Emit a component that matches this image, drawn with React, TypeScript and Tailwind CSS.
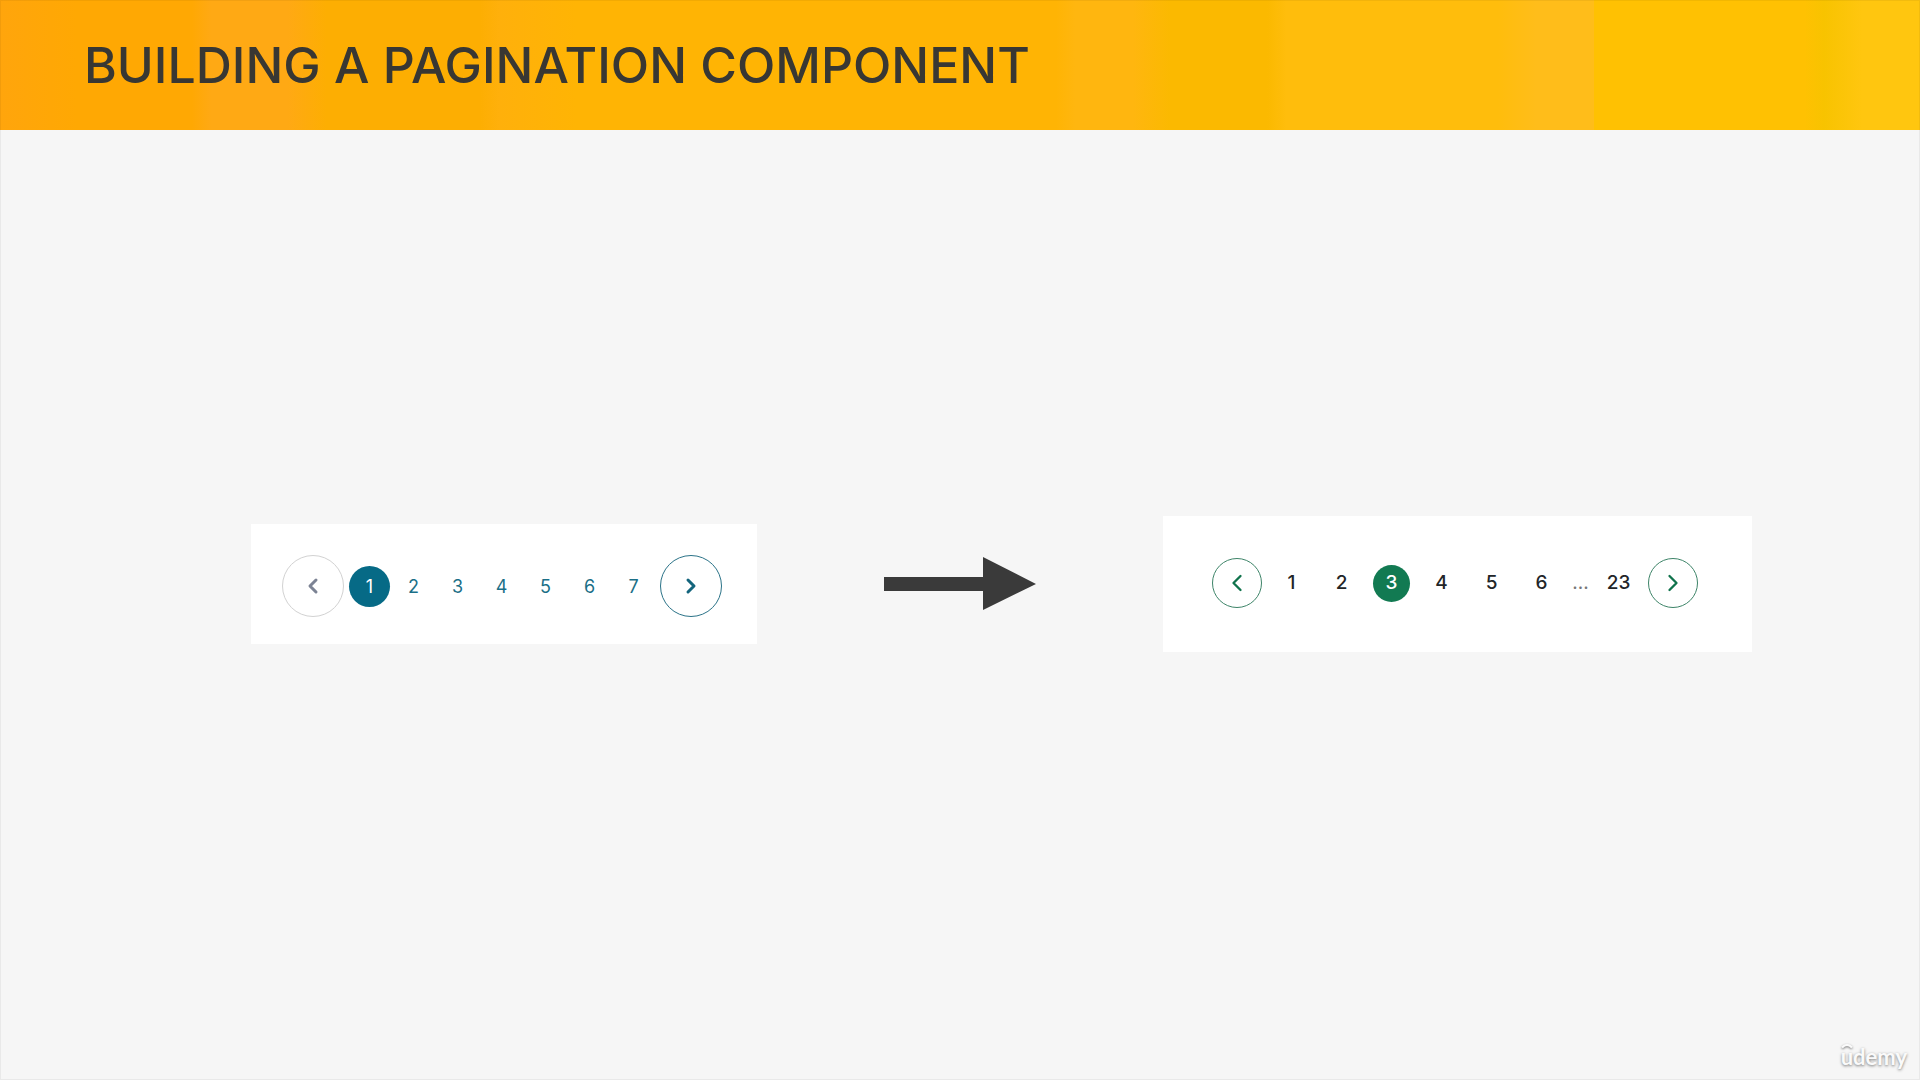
import { ChevronLeft, ChevronRight } from "lucide-react";

const leftPages = [1, 2, 3, 4, 5, 6, 7];
const rightPages = [1, 2, 3, 4, 5, 6];

function BasicPagination() {
  return (
    <nav aria-label="Basic pagination" className="flex items-center bg-white pt-[31px] pb-[27px] pl-[31px] pr-[35px] text-[18px] leading-6 text-[#1b6f87]">
      <button aria-label="Previous page" className="mr-1 flex size-[62px] items-center justify-center rounded-full border border-[#d2d2d2] text-[#7c8394]">
        <ChevronLeft className="size-6" strokeWidth={3} />
      </button>
      {leftPages.map((page) => (
        <button key={page} aria-current={page === 1 ? "page" : undefined} className="group flex w-11 items-center justify-center">
          <span className="flex size-[41px] items-center justify-center rounded-full pt-0.5 group-aria-[current=page]:bg-[#066a86] group-aria-[current=page]:text-white">
            {page}
          </span>
        </button>
      ))}
      <button aria-label="Next page" className="ml-1 flex size-[62px] items-center justify-center rounded-full border border-[#2b7388] text-[#14657d]">
        <ChevronRight className="size-6" strokeWidth={3} />
      </button>
    </nav>
  );
}

function AdvancedPagination() {
  return (
    <nav aria-label="Advanced pagination" className="flex items-center bg-white pt-[42px] pb-11 pl-[49px] pr-[54px] text-[19px] leading-6 font-medium text-[#222528]">
      <button aria-label="Previous page" className="mr-[5px] flex size-[50px] items-center justify-center rounded-full border border-[#3d8468] text-[#10734c]">
        <ChevronLeft className="size-7" strokeWidth={2} />
      </button>
      {rightPages.map((page) => (
        <button key={page} aria-current={page === 3 ? "page" : undefined} className="group flex w-[50px] items-center justify-center">
          <span className="flex size-[37px] items-center justify-center rounded-full group-aria-[current=page]:bg-[#127a52] group-aria-[current=page]:text-white">
            {page}
          </span>
        </button>
      ))}
      <span className="w-7 text-center font-normal text-[#777]">...</span>
      <button className="w-12 text-center">23</button>
      <button aria-label="Next page" className="ml-[5px] flex size-[50px] items-center justify-center rounded-full border border-[#3d8468] text-[#10734c]">
        <ChevronRight className="size-7" strokeWidth={2} />
      </button>
    </nav>
  );
}

export default function App() {
  return (
    <div className="relative flex min-h-screen flex-col bg-[#f6f6f6] font-['Inter',sans-serif]">
      <header className="flex h-[130px] items-center bg-[linear-gradient(90deg,#ffa50c_0%,#ffa803_4%,#ffa803_10%,#ffa914_11%,#ffa914_15%,#fdae02_17%,#fdae02_25%,#ffb00b_26%,#ffb404_30%,#ffb404_55%,#ffb60f_56%,#ffb60f_59%,#fbb900_61%,#fbb900_66%,#ffbd0c_67%,#ffbd0c_78%,#ffbd1a_80%,#ffbd1a_83%,#ffc102_83%,#ffc102_94%,#f8c300_95%,#ffc60f_97%,#ffc60f_100%)] px-21">
        <h1 className="text-[50px] leading-16 font-medium whitespace-nowrap text-[#383733]">BUILDING A PAGINATION COMPONENT</h1>
      </header>
      <main className="flex flex-1 items-center justify-center gap-[127px] pb-[42px] pl-[82px]">
        <BasicPagination />
        <svg aria-hidden="true" viewBox="0 0 152 54" className="h-[54px] w-[152px] shrink-0 fill-[#3a3a3a]">
          <path d="M0 20h99V0l53 27-53 26V34H0z" />
        </svg>
        <AdvancedPagination />
      </main>
      <div className="absolute right-[13px] bottom-[9px] font-['Lato',sans-serif] text-[22px] leading-7 font-bold text-[#fafafa] text-shadow-[0_1px_3px_#777]">
        <svg aria-hidden="true" viewBox="0 0 12 6" className="absolute top-0 left-0 h-[6px] w-3 fill-none stroke-[#fafafa] drop-shadow-[0_1px_1px_#777]">
          <path d="M1 4.6Q6-.8 11 4.6" strokeWidth="2.2" />
        </svg>
        udemy
      </div>
      <div className="pointer-events-none absolute inset-0 border border-black/5" />
    </div>
  );
}
